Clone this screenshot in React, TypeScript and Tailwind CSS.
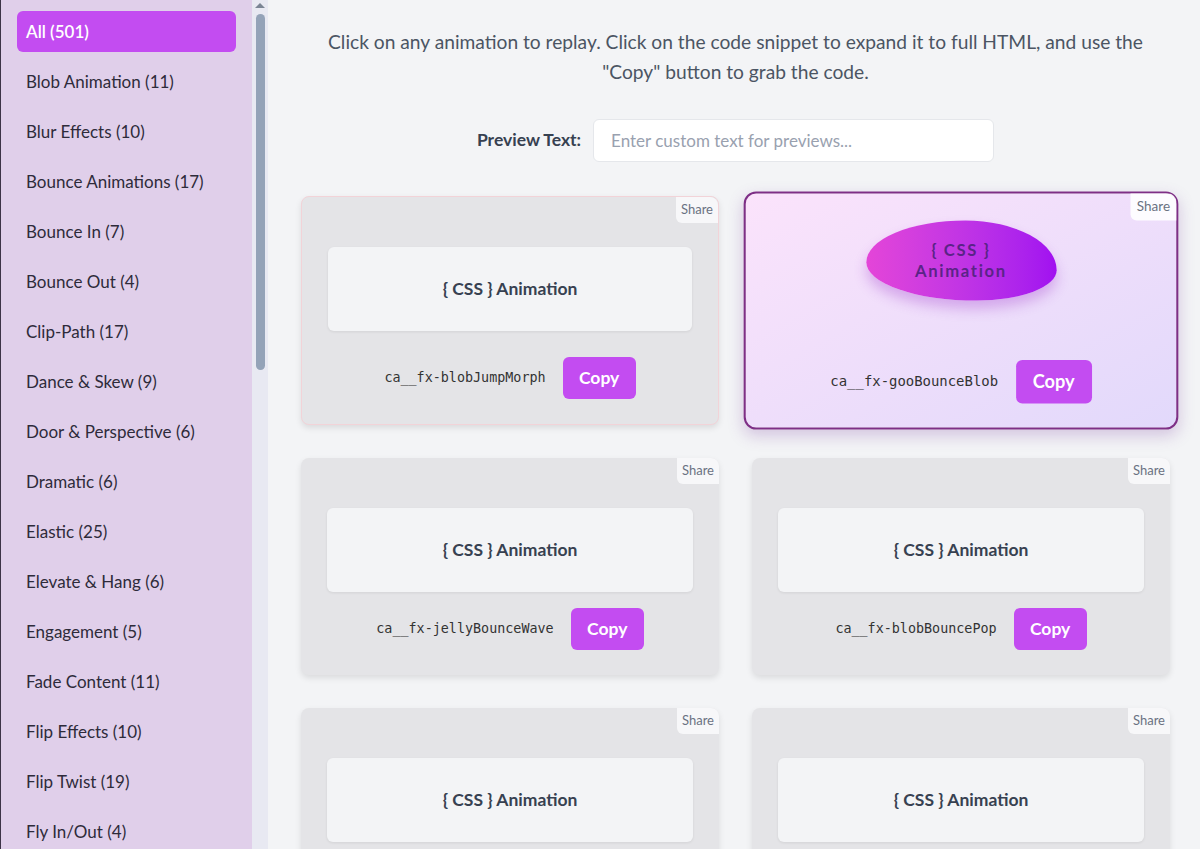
import React, { useState } from 'react';

const categories: string[] = [
  "All (501)", "Blob Animation (11)", "Blur Effects (10)", "Bounce Animations (17)", "Bounce In (7)",
  "Bounce Out (4)", "Clip-Path (17)", "Dance & Skew (9)", "Door & Perspective (6)", "Dramatic (6)",
  "Elastic (25)", "Elevate & Hang (6)", "Engagement (5)", "Fade Content (11)", "Flip Effects (10)",
  "Flip Twist (19)", "Fly In/Out (4)",
];

interface Anim {
  name: string;
  active?: boolean;
  tinted?: boolean;
}

const anims: Anim[] = [
  { name: "ca__fx-blobJumpMorph", tinted: true },
  { name: "ca__fx-gooBounceBlob", active: true },
  { name: "ca__fx-jellyBounceWave" },
  { name: "ca__fx-blobBouncePop" },
  { name: "ca__fx-blobMorphSpin" },
  { name: "ca__fx-liquidBounce" },
];

const CodeRow: React.FC<{ name: string; top: string }> = ({ name, top }) => (
  <div className={`mt-auto ${top} flex items-center justify-center gap-[17px]`}>
    <code className="text-[13.4px] text-[#333] [font-family:'DejaVu_Sans_Mono',monospace]">{name}</code>
    <button className="h-[42px] w-[73px] rounded-md bg-[#c34cf1] text-white font-bold text-[17.5px]">Copy</button>
  </div>
);

const Card: React.FC<{ anim: Anim }> = ({ anim }) => {
  if (anim.active) {
    return (
      <div className="relative flex flex-col rounded-xl border-2 border-[#7e2f86] bg-gradient-to-br from-[#fbe3fb] to-[#e2d9fb] px-[26px] pt-[48px] pb-[23px] scale-[1.04] shadow-[0_6px_14px_rgba(120,60,160,0.25)] z-10">
        <span className="absolute right-0 top-0 rounded-bl-md rounded-tr-lg bg-white/90 px-[6px] py-[3px] text-[13px] text-gray-500">Share</span>
        <div className="h-[84px] flex items-center justify-center">
          <div className="-translate-y-[26px] w-[183px] h-[77px] rounded-[52%_48%_42%_58%/52%_62%_38%_48%] bg-gradient-to-r from-[#e445d8] to-[#a10ff0] shadow-[0_8px_12px_rgba(150,40,200,0.3)] flex flex-col items-center justify-center text-[#5a2487] font-bold text-[16px] leading-[20px] tracking-[0.1em]">
            <span>{"{ CSS }"}</span>
            <span>Animation</span>
          </div>
        </div>
        <CodeRow name={anim.name} top="pt-[28px]" />
      </div>
    );
  }
  return (
    <div className={`relative flex flex-col rounded-lg bg-[#e4e4e7] px-[26px] pt-[50px] pb-[25px] shadow-[0_3px_6px_rgba(0,0,0,0.1)] ${anim.tinted ? 'border border-[#f2d3d8]' : ''}`}>
      <span className="absolute right-0 top-0 rounded-bl-md rounded-tr-lg bg-[#f7f7f9] px-[5px] py-[3px] text-[13px] text-gray-500">Share</span>
      <div className="h-[84px] rounded-md bg-[#f3f4f6] shadow-[0_1px_3px_rgba(0,0,0,0.08)] flex items-center justify-center">
        <span className="font-bold text-[17.5px] text-[#374151]">{"{ CSS } Animation"}</span>
      </div>
      <CodeRow name={anim.name} top="pt-4" />
    </div>
  );
};

export default function App() {
  const [active, setActive] = useState(0);
  const [text, setText] = useState('');

  return (
    <div className="flex h-[849px] w-full overflow-hidden bg-[#f3f4f6] [font-family:Lato,'Noto_Sans',sans-serif]">
      {/* Sidebar */}
      <aside className="flex shrink-0 h-full">
        <nav className="w-[252px] h-full overflow-hidden bg-[#e0cfea] border-l border-[#3d3347] flex flex-col gap-[9px] pt-[11px] px-[16px]">
          {categories.map((c, i) => (
            <button
              key={c}
              onClick={() => setActive(i)}
              className={`h-[41px] shrink-0 px-[9px] rounded-md flex items-center text-left text-[17px] ${
                active === i ? 'bg-[#c34cf1] text-white font-semibold' : 'text-[#2e2b3a]'
              }`}
            >
              {c}
            </button>
          ))}
        </nav>
        {/* scrollbar */}
        <div className="w-[16px] h-full bg-[#e8e9f2] flex flex-col items-center pt-[3px]">
          <div className="w-0 h-0 border-x-[5px] border-x-transparent border-b-[5px] border-b-[#7b8594]" />
          <div className="mt-[6px] w-[9px] h-[356px] rounded-full bg-[#94a3b8]" />
        </div>
      </aside>

      {/* Main */}
      <main className="flex-1 h-full overflow-hidden pl-[33px] pr-[30px] pt-[27px]">
        <p className="text-center text-[19.2px] leading-[30px] text-[#4b5563]">
          Click on any animation to replay. Click on the code snippet to expand it to full HTML, and use the
          <br />
          "Copy" button to grab the code.
        </p>

        <div className="mt-[32px] flex items-center justify-center gap-3">
          <label className="font-bold text-[17.5px] text-[#374151]">Preview Text:</label>
          <input
            value={text}
            onChange={(e) => setText(e.target.value)}
            placeholder="Enter custom text for previews..."
            className="w-[401px] h-[43px] rounded-md border border-gray-200 bg-white px-[17px] text-[17px] text-gray-700 placeholder:text-gray-400 focus:outline-none"
          />
        </div>

        <div className="mt-[34px] grid grid-cols-2 gap-[33px]">
          {anims.map((a) => (
            <Card key={a.name} anim={a} />
          ))}
        </div>
      </main>
    </div>
  );
}
